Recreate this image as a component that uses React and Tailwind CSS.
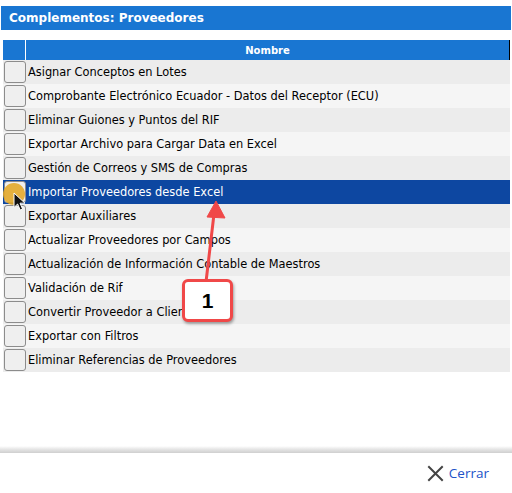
import React from 'react';

const items = [
  'Asignar Conceptos en Lotes',
  'Comprobante Electrónico Ecuador - Datos del Receptor (ECU)',
  'Eliminar Guiones y Puntos del RIF',
  'Exportar Archivo para Cargar Data en Excel',
  'Gestión de Correos y SMS de Compras',
  'Importar Proveedores desde Excel',
  'Exportar Auxiliares',
  'Actualizar Proveedores por Campos',
  'Actualización de Información Contable de Maestros',
  'Validación de Rif',
  'Convertir Proveedor a Cliente',
  'Exportar con Filtros',
  'Eliminar Referencias de Proveedores',
];

const SELECTED = 5;

export default function App() {
  return (
    <div className="relative w-[512px] h-[493px] bg-white overflow-hidden" style={{ fontFamily: '"DejaVu Sans", Verdana, sans-serif' }}>
      {/* title bar */}
      <div className="mt-[6px] mx-[1px] h-[24px] bg-[#1976d2] flex items-center pl-[8px]">
        <span className="text-white font-bold text-[12px]">Complementos: Proveedores</span>
      </div>

      {/* table */}
      <div className="mt-[10px] ml-[3px] mr-[2px]">
        <div className="flex h-[20px] bg-[#1976d2] border-r border-black">
          <div className="w-[23px] border-r border-white"></div>
          <div className="flex-1 flex items-center justify-center text-white font-bold text-[10px]">Nombre</div>
        </div>
        {items.map((name, i) => {
          const sel = i === SELECTED;
          const bg = sel ? 'bg-[#0d47a1]' : i % 2 === 0 ? 'bg-[#ececec]' : 'bg-[#f5f5f5]';
          return (
            <div key={name} className={`flex h-[24px] items-center ${bg}`}>
              <div className="w-[24px] flex items-center justify-center">
                <div className="w-[22px] h-[22px] rounded-[3px] border border-[#8c8c8c] bg-[#efefef]"></div>
              </div>
              <span className={`ml-[1px] mt-[1px] text-[11.4px] whitespace-nowrap ${sel ? 'text-white' : 'text-black'}`}>{name}</span>
            </div>
          );
        })}
      </div>

      {/* cursor highlight on selected checkbox */}
      <div className="absolute left-[3px] top-[183px] w-[22px] h-[22px] rounded-full bg-[#e2a92a] opacity-90"></div>
      <svg className="absolute left-[13px] top-[192px]" width="15" height="20" viewBox="0 0 15 20">
        <path d="M1 1 L1 15.5 L4.6 12 L7.2 18 L9.6 17 L7 11.2 L12 11.2 Z" fill="#111" stroke="#fff" strokeWidth="1" strokeLinejoin="round" />
      </svg>

      {/* annotation arrow */}
      <svg className="absolute left-0 top-0 pointer-events-none" width="512" height="493" viewBox="0 0 512 493">
        <line x1="206" y1="282" x2="214" y2="214" stroke="#f04848" strokeWidth="3" strokeLinecap="round" />
        <path d="M216 201 L225 218 L207 217 Z" fill="#f04848" stroke="#f04848" strokeWidth="1" strokeLinejoin="round" />
      </svg>
      <div className="absolute left-[182px] top-[279px] w-[51px] h-[43px] rounded-[6px] border-[3px] border-[#f04848] bg-white flex items-center justify-center shadow-[1px_2px_3px_rgba(0,0,0,0.35)]">
        <span className="font-bold text-[21px] text-black" style={{ fontFamily: '"Liberation Sans", Arial, sans-serif' }}>1</span>
      </div>

      {/* footer */}
      <div className="absolute left-0 right-0 top-[446px] h-[7px] bg-gradient-to-b from-white via-[#e4e4e4] to-[#cfcfcf]"></div>
      <div className="absolute left-0 right-0 top-[453px] flex justify-end pr-[23px] pt-[10px]">
        <div className="flex items-center gap-[5px]">
          <svg width="17" height="17" viewBox="0 0 17 17">
            <path d="M2 2 L15 15 M15 2 L2 15" stroke="#444" strokeWidth="2" strokeLinecap="square" />
          </svg>
          <span className="text-[13.5px] text-[#2152c8]" style={{ fontFamily: '"Open Sans", sans-serif' }}>Cerrar</span>
        </div>
      </div>
    </div>
  );
}
